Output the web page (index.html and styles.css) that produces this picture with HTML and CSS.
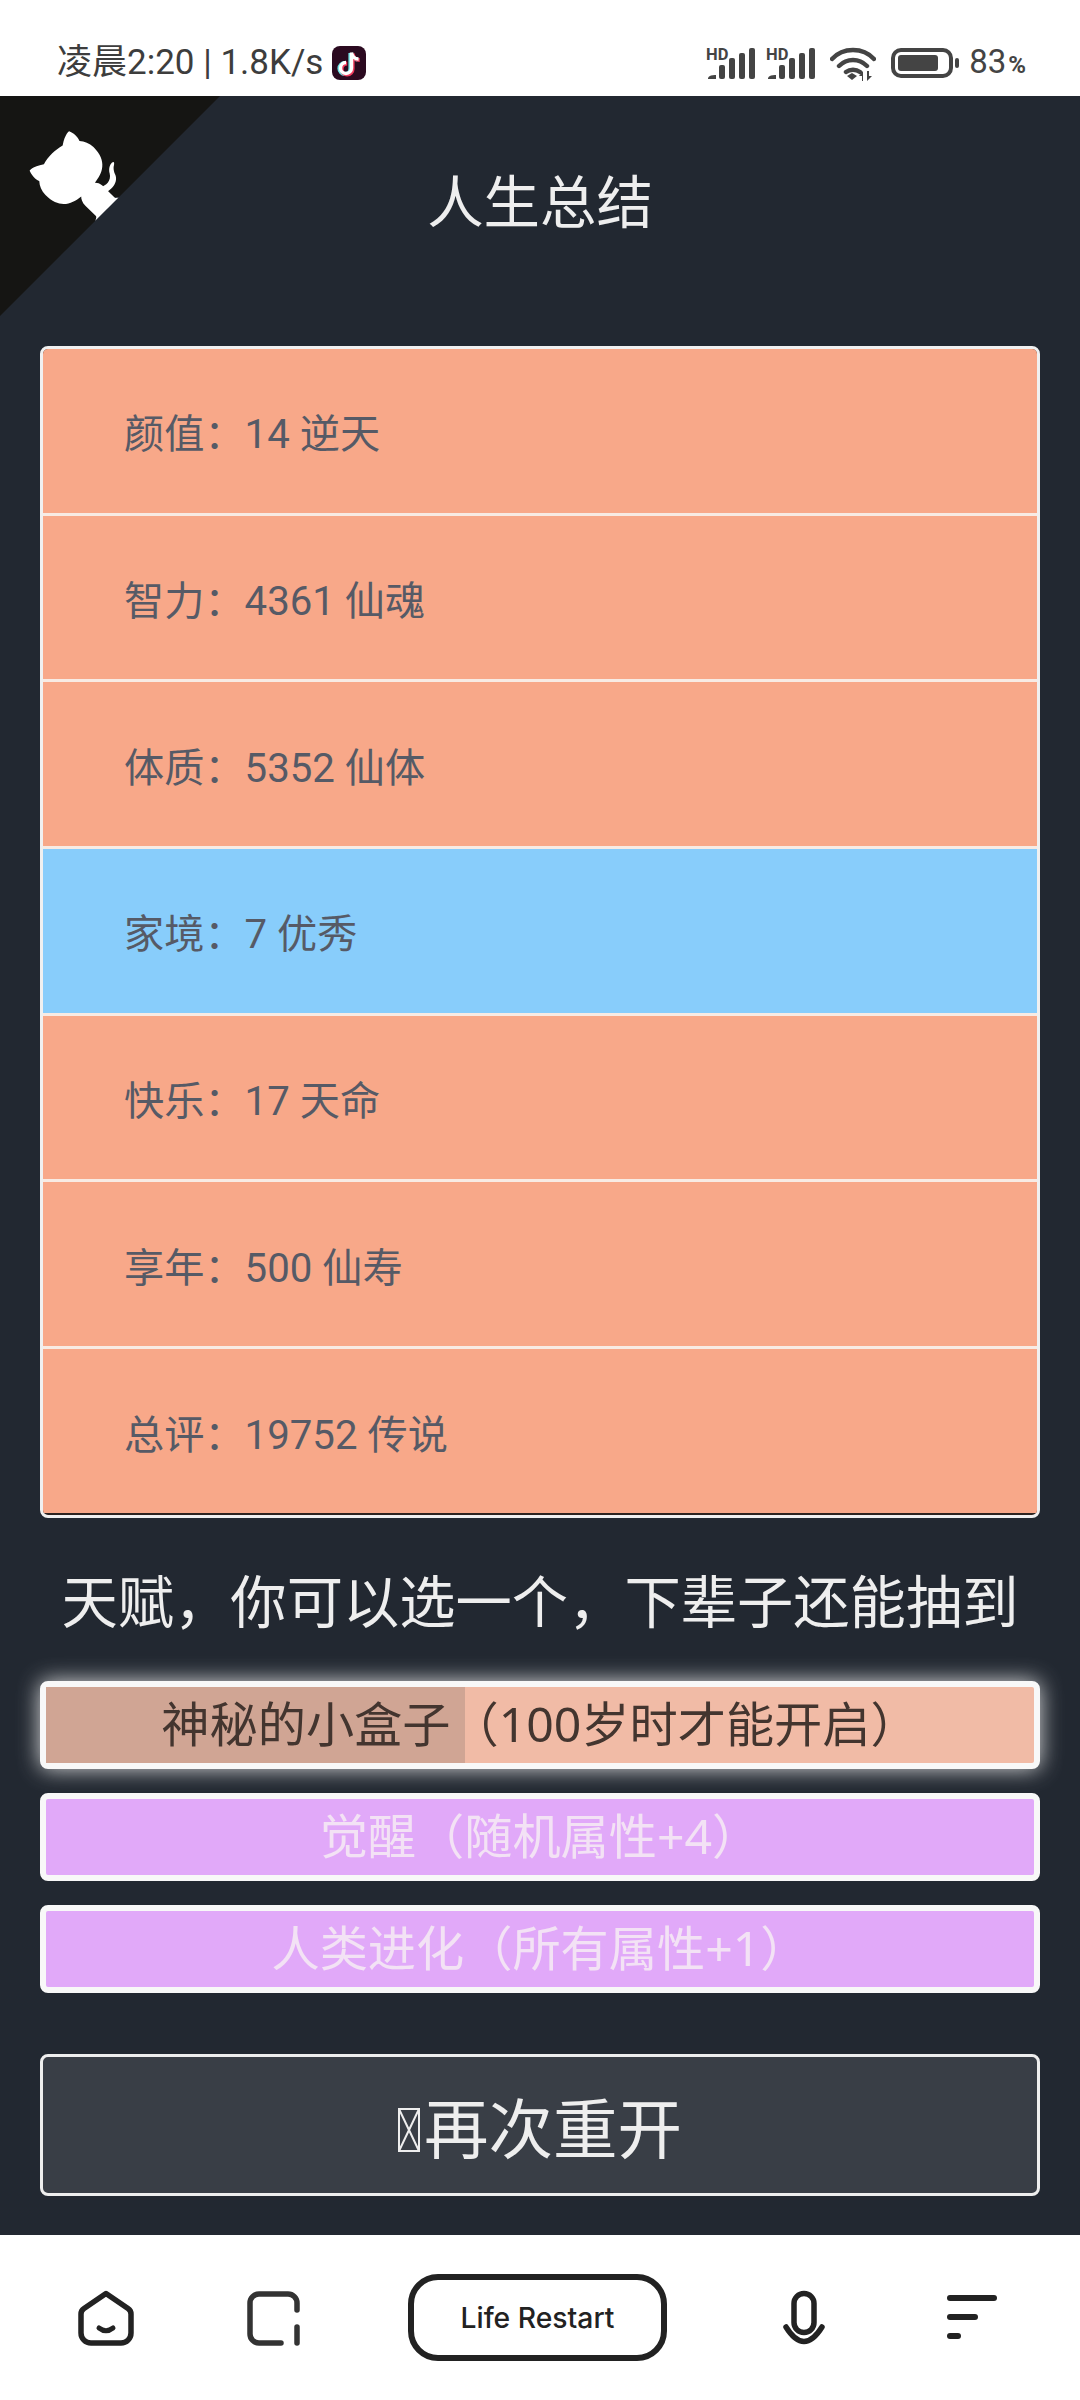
FILE: index.html
```
<!DOCTYPE html>
<html lang="zh-CN">
<head>
<meta charset="utf-8">
<title>人生总结</title>
<link rel="stylesheet" href="styles.css">
</head>
<body>
<header class="status">
  <div class="status-left">
    <span class="status-text">凌晨2:20 | 1.8K/s</span>
    <svg class="tiktok" viewBox="0 0 34 34"><rect width="34" height="34" rx="8" fill="#2b0a20"/><path d="M19.500 6.500v15.500a5.500 5.500 0 1 1-5.500-5.500M19.500 6.500c.5 4 3.500 6.500 7 6.500" fill="none" stroke="#6fe5e6" stroke-width="3.800" transform="translate(-1.200 0.500)"/><path d="M19.500 6.500v15.500a5.500 5.500 0 1 1-5.500-5.500M19.500 6.500c.5 4 3.500 6.500 7 6.500" fill="none" stroke="#ee3a5c" stroke-width="3.800" transform="translate(1.200 1)"/><path d="M19.500 6.500v15.500a5.500 5.500 0 1 1-5.500-5.500M19.500 6.500c.5 4 3.500 6.500 7 6.500" fill="none" stroke="#fff" stroke-width="3.400"/></svg>
  </div>
  <div class="status-right">
    <svg class="signal" viewBox="0 -4 50 36"><text x="0" y="11.500" class="hd">HD</text><path d="M2 31v-1a7 4 0 0 1 8-3v4z" fill="#444"/><rect x="13" y="17" width="6" height="14" rx="2" fill="#444"/><rect x="23" y="10" width="6" height="21" rx="2" fill="#444"/><rect x="33" y="5" width="6" height="26" rx="2" fill="#444"/><rect x="43" y="0" width="6" height="31" rx="2" fill="#444"/></svg>
    <svg class="signal signal-two" viewBox="0 -4 50 36"><text x="0" y="11.500" class="hd">HD</text><path d="M2 31v-1a7 4 0 0 1 8-3v4z" fill="#444"/><rect x="13" y="17" width="6" height="14" rx="2" fill="#444"/><rect x="23" y="10" width="6" height="21" rx="2" fill="#444"/><rect x="33" y="5" width="6" height="26" rx="2" fill="#444"/><rect x="43" y="0" width="6" height="31" rx="2" fill="#444"/></svg>
    <svg class="wifi" viewBox="0 0 46 34"><path d="M2 12C13 0 33 0 44 12M9 19c8-8 20-8 28 0M16 25c4-3 10-3 14 0" fill="none" stroke="#444" stroke-width="4.400" stroke-linecap="round"/><path d="M17 29l5-3 5 3-5 4z" fill="#444"/><path d="M32 34v-5h-3l4-5v10zM37 24v10l5-5h-3v-5z" fill="#444"/></svg>
    <svg class="battery" viewBox="0 0 68 30"><rect x="2" y="2" width="58" height="26" rx="8" fill="none" stroke="#444" stroke-width="4"/><rect x="7" y="7" width="40" height="16" rx="3" fill="#444"/><rect x="64" y="10" width="4" height="10" rx="2" fill="#444"/></svg>
    <span class="battery-text">83<span class="percent">%</span></span>
  </div>
</header>

<main class="page">
  <svg class="corner" viewBox="0 0 250 250"><path d="M0,0 L115,115 L130,115 L142,142 L250,250 L250,0 Z" fill="#151513"/><path d="M128.3,109.0 C113.8,99.7 119.0,89.6 119.0,89.6 C122.0,82.7 120.5,78.6 120.5,78.6 C119.2,72.0 123.4,76.3 123.4,76.3 C127.3,80.9 125.5,87.3 125.5,87.3 C122.9,97.6 130.6,101.9 134.4,103.2" fill="#fff"/><path d="M115.0,115.0 C114.9,115.1 118.7,116.5 119.8,115.4 L133.7,101.6 C136.9,99.2 139.9,98.4 142.2,98.6 C133.8,88.0 127.5,74.4 143.8,58.0 C148.5,53.4 154.0,51.2 159.7,51.0 C160.3,49.4 163.2,43.6 171.4,40.1 C171.4,40.1 176.1,42.5 178.8,56.2 C183.1,58.6 187.2,61.8 190.9,65.4 C194.5,69.0 197.7,73.2 200.1,77.6 C213.8,80.2 216.3,84.9 216.3,84.9 C212.7,93.1 206.9,96.0 205.4,96.6 C205.1,102.4 203.0,107.8 198.3,112.5 C181.9,128.9 168.3,122.5 157.7,114.1 C157.9,116.9 156.7,120.9 152.7,124.9 L141.0,136.5 C139.8,137.7 141.6,141.9 141.8,141.8 Z" fill="#fff"/></svg>

  <h1 class="title">人生总结</h1>

  <ul class="summary">
    <li class="row">颜值：14 逆天</li>
    <li class="row">智力：4361 仙魂</li>
    <li class="row">体质：5352 仙体</li>
    <li class="row row-blue">家境：7 优秀</li>
    <li class="row">快乐：17 天命</li>
    <li class="row">享年：500 仙寿</li>
    <li class="row">总评：19752 传说</li>
  </ul>

  <h2 class="talent-title">天赋，你可以选一个，下辈子还能抽到</h2>

  <ul class="talents">
    <li class="talent talent-selected"><span class="talent-fill"></span><span class="talent-label">神秘的小盒子（100岁时才能开启）</span></li>
    <li class="talent talent-purple"><span class="talent-label">觉醒（随机属性+4）</span></li>
    <li class="talent talent-purple"><span class="talent-label">人类进化（所有属性+1）</span></li>
  </ul>

  <button class="restart"><svg class="tofu" viewBox="0 0 22 44"><path d="M1 1h20v42H1zM1 1l20 42M21 1L1 43" fill="none" stroke="#eeeeee" stroke-width="2"/></svg>再次重开</button>
</main>

<nav class="nav">
  <svg class="ico ico-home" viewBox="0 0 56 56"><path d="M28 3.500L50 18.500Q53 20.500 53 24V43a10 10 0 0 1-10 10H13a10 10 0 0 1-10-10V24Q3 20.500 6 18.500Z" fill="none" stroke="#222" stroke-width="5.500" stroke-linejoin="round"/><path d="M21 38q7 5.500 14 0" fill="none" stroke="#222" stroke-width="5" stroke-linecap="round"/></svg>
  <svg class="ico ico-tab" viewBox="0 0 55 56"><path d="M51 20V13a9 9 0 0 0-9-9H13a9 9 0 0 0-9 9V44a9 9 0 0 0 9 9H35" fill="none" stroke="#333" stroke-width="5.500" stroke-linecap="round"/><path d="M51 37V53" fill="none" stroke="#333" stroke-width="5.500" stroke-linecap="round"/></svg>
  <div class="pill">Life Restart</div>
  <svg class="ico ico-mic" viewBox="0 0 44 56"><rect x="12" y="3.500" width="20" height="39" rx="10" fill="none" stroke="#222" stroke-width="5.500"/><path d="M4 37Q22 66 40 37" fill="none" stroke="#222" stroke-width="5.500" stroke-linecap="round"/></svg>
  <svg class="ico ico-menu" viewBox="0 0 50 46"><rect x="0" y="0" width="50" height="6" rx="3" fill="#222"/><rect x="0" y="19" width="31" height="6" rx="3" fill="#222"/><rect x="0" y="38" width="14" height="6" rx="3" fill="#222"/></svg>
</nav>
</body>
</html>
```

FILE: styles.css
```
* { box-sizing: border-box; margin: 0; padding: 0; }
html, body { width: 1080px; height: 2400px; background: #fff; overflow: hidden; }
body { font-family: "Noto Sans", "Noto Sans CJK SC", sans-serif; display: flex; flex-direction: column; }
ul { list-style: none; }

.status { height: 96px; display: flex; justify-content: space-between; align-items: center; padding: 0 54px 0 57px; background: #fff; color: #3d3d3d; }
.status-left { display: flex; align-items: center; gap: 9px; margin-top: 30px; }
.status-text { font-family: Roboto, "Noto Sans CJK SC", sans-serif; font-size: 35px; line-height: 40px; }
.tiktok { width: 34px; height: 34px; display: block; }
.status-right { display: flex; align-items: center; margin-top: 30px; }
.signal { width: 50px; height: 36px; display: block; margin-bottom: 2px; }
.signal-two { margin-left: 10px; }
.hd { font-family: Roboto, sans-serif; font-weight: 700; font-size: 16.500px; fill: #444; }
.wifi { width: 46px; height: 34px; margin-left: 14px; margin-top: 2px; display: block; }
.battery { width: 68px; height: 30px; margin-left: 15px; display: block; }
.battery-text { margin-left: 10px; font-family: Roboto, sans-serif; font-size: 33px; line-height: 36px; color: #444; }
.percent { font-size: 24px; font-weight: 700; margin-left: 2px; }

.page { position: relative; height: 2139px; background: #222831; padding: 0 40px; color: #eeeeee; display: flex; flex-direction: column; }
.corner { position: absolute; left: 0; top: 0; width: 220px; height: 220px; transform: scaleX(-1); }
.title { font-weight: 400; font-size: 56.400px; line-height: 80px; text-align: center; margin-top: 66px; }

.summary { margin-top: 104px; height: 1172px; border: 3px solid #f0f0f0; border-radius: 8px; overflow: hidden; background: #2d2320; }
.row { height: 166.700px; background: #f8a889; color: #565a66; font-family: Roboto, "Noto Sans CJK SC", sans-serif; font-size: 40.200px; padding-left: 81px; display: flex; align-items: center; border-bottom: 3px solid #f8ebe4; }
.row:last-child { height: 164px; border-bottom: none; }
.row-blue { background: #88cdfb; }

.talent-title { font-weight: 400; font-size: 56.300px; line-height: 80px; text-align: center; margin-top: 43px; }

.talents { margin-top: 40px; display: flex; flex-direction: column; gap: 24px; }
.talent { position: relative; height: 88px; border: 6px solid #f8f8f8; border-radius: 8px; font-size: 48.200px; text-align: center; line-height: 72px; overflow: hidden; }
.talent-selected { background: #f1bba6; color: #43352f; overflow: visible; box-shadow: 0 0 22px rgba(238, 238, 238, 0.9); }
.talent-fill { position: absolute; left: 0; top: 0; bottom: 0; width: 419px; background: #d0a594; }
.talent-label { position: relative; }
.talent-purple { background: #e1a9f9; color: #f3e2f5; }

.restart { margin-top: 61px; height: 142px; border: 3px solid #eeeeee; border-radius: 8px; background: #393e46; color: #eeeeee; font-family: "Noto Sans", "Noto Sans CJK SC", sans-serif; font-size: 64.500px; display: flex; align-items: center; justify-content: center; }
.tofu { width: 22px; height: 44px; margin-top: 10px; margin-right: 4px; display: block; }

.nav { height: 165px; background: #fff; display: flex; align-items: center; padding-left: 78px; }
.ico { display: block; }
.ico-home { width: 56px; height: 56px; }
.ico-tab { width: 55px; height: 56px; margin-left: 112px; }
.pill { width: 259px; height: 87px; margin-left: 107px; border: 6px solid #222; border-radius: 30px; display: flex; align-items: center; justify-content: center; font-family: Inter, sans-serif; font-weight: 500; font-size: 28.300px; color: #222; }
.ico-mic { width: 44px; height: 56px; margin-left: 115px; }
.ico-menu { width: 50px; height: 46px; margin-left: 121px; }
```
